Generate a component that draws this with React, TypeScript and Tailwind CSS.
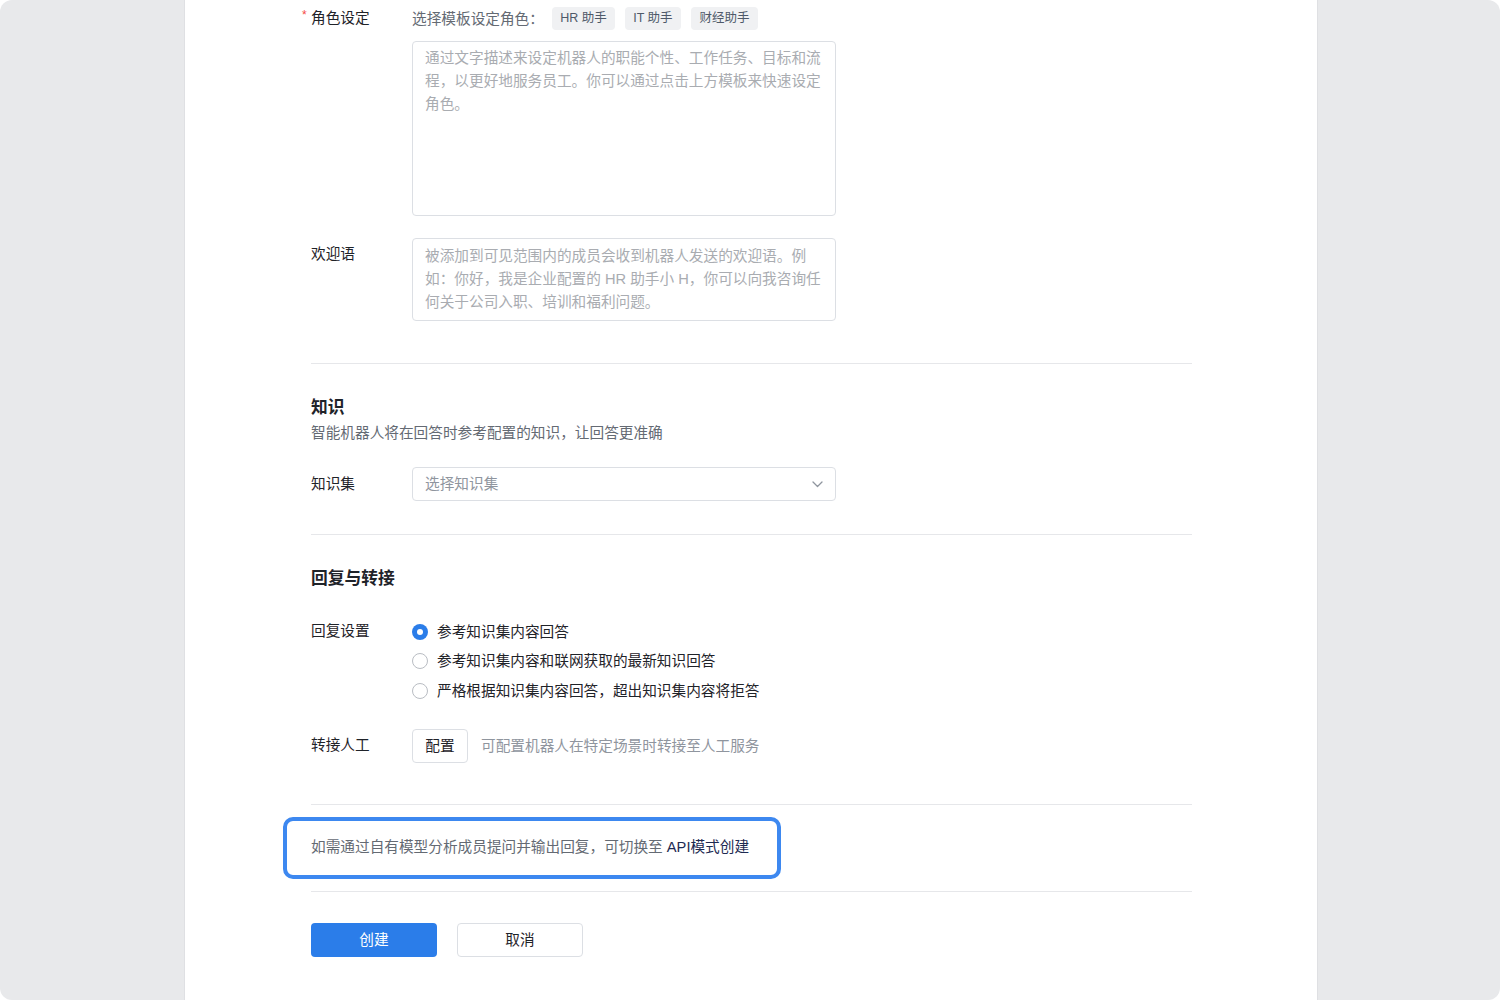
import React from 'react';

const font = { fontFamily: '"Liberation Sans", "Noto Sans CJK SC", sans-serif' };

function Label({ children, required }: { children: React.ReactNode; required?: boolean }) {
  return (
    <div className="relative w-[101px] shrink-0 text-[14.67px] leading-[23px] text-[#1f2329]">
      {required && <span className="absolute -left-[9px] top-[-3px] text-[12px] text-[#f54a45]">*</span>}
      {children}
    </div>
  );
}

function Radio({ checked, label }: { checked?: boolean; label: string }) {
  return (
    <div className="flex h-[29.5px] items-center">
      {checked ? (
        <span className="flex h-[16px] w-[16px] items-center justify-center rounded-full bg-[#2b7de9]">
          <span className="h-[6px] w-[6px] rounded-full bg-white" />
        </span>
      ) : (
        <span className="h-[16px] w-[16px] rounded-full border border-[#b9bdc3] bg-white" />
      )}
      <span className="ml-[9px] text-[14.67px] text-[#1f2329]">{label}</span>
    </div>
  );
}

const Divider = ({ className }: { className: string }) => <div className={`h-px bg-[#e6e7ea] ${className}`} />;

export default function App() {
  const chips = [
    { name: 'HR 助手', w: 'w-[63px]' },
    { name: 'IT 助手', w: 'w-[56px]' },
    { name: '财经助手', w: 'w-[67px]' },
  ];

  return (
    <div className="h-[1000px] w-[1500px] bg-white" style={font}>
      <div className="flex h-full overflow-hidden rounded-[12px] bg-[#e8e9eb] pl-[184px]">
        <div className="h-full w-[1134px] border-x border-[#dfe0e3] bg-white pl-[126px] pr-[125px]">
          {/* 角色设定 */}
          <div className="mt-[7px] flex">
            <Label required>角色设定</Label>
            <div className="w-[424px]">
              <div className="flex h-[23px] items-center">
                <span className="text-[14.67px] text-[#646a73]">选择模板设定角色：</span>
                <div className="ml-[8px] flex gap-[10px]">
                  {chips.map((c) => (
                    <span
                      key={c.name}
                      className={`flex h-[23px] ${c.w} items-center justify-center rounded-[4px] bg-[#f0f1f3] text-[12.5px] text-[#4e5969]`}
                    >
                      {c.name}
                    </span>
                  ))}
                </div>
              </div>
              <div className="mt-[11px] h-[175px] rounded-[4px] border border-[#dcdfe4] px-[12px] py-[5px] text-[14.67px] leading-[23px] text-[#a9acb1]">
                <div className="whitespace-nowrap">通过文字描述来设定机器人的职能个性、工作任务、目标和流</div>
                <div className="whitespace-nowrap">程，以更好地服务员工。你可以通过点击上方模板来快速设定</div>
                <div className="whitespace-nowrap">角色。</div>
              </div>
            </div>
          </div>

          {/* 欢迎语 */}
          <div className="mt-[22px] flex">
            <div className="pt-[5px]">
              <Label>欢迎语</Label>
            </div>
            <div className="h-[83px] w-[424px] rounded-[4px] border border-[#dcdfe4] px-[12px] py-[6px] text-[14.67px] leading-[23px] text-[#a9acb1]">
              <div className="whitespace-nowrap">被添加到可见范围内的成员会收到机器人发送的欢迎语。例</div>
              <div className="whitespace-nowrap">如：你好，我是企业配置的 HR 助手小 H，你可以向我咨询任</div>
              <div className="whitespace-nowrap">何关于公司入职、培训和福利问题。</div>
            </div>
          </div>

          <Divider className="mt-[42px]" />

          {/* 知识 */}
          <div className="mt-[32px] text-[16.75px] font-bold leading-[24px] text-[#1f2329]">知识</div>
          <div className="mt-[2px] text-[14.67px] leading-[22px] text-[#646a73]">智能机器人将在回答时参考配置的知识，让回答更准确</div>

          <div className="mt-[23px] flex items-center">
            <Label>知识集</Label>
            <div className="flex h-[34px] w-[424px] items-center justify-between rounded-[4px] border border-[#dcdfe4] pl-[12px] pr-[12px]">
              <span className="text-[14.67px] text-[#8f959e]">选择知识集</span>
              <svg width="11" height="7" viewBox="0 0 11 7" fill="none">
                <path d="M1 1l4.5 4.5L10 1" stroke="#8f959e" strokeWidth="1.3" strokeLinecap="round" strokeLinejoin="round" />
              </svg>
            </div>
          </div>

          <Divider className="mt-[33px]" />

          {/* 回复与转接 */}
          <div className="mt-[32px] text-[16.75px] font-bold leading-[24px] text-[#1f2329]">回复与转接</div>

          <div className="mt-[26px] flex">
            <div className="pt-[3px]">
              <Label>回复设置</Label>
            </div>
            <div>
              <Radio checked label="参考知识集内容回答" />
              <Radio label="参考知识集内容和联网获取的最新知识回答" />
              <Radio label="严格根据知识集内容回答，超出知识集内容将拒答" />
            </div>
          </div>

          <div className="mt-[23px] flex items-center">
            <Label>转接人工</Label>
            <button className="h-[34px] w-[56px] rounded-[4px] border border-[#dcdfe4] bg-white text-[14.67px] text-[#1f2329]">
              配置
            </button>
            <span className="ml-[13px] text-[14.67px] text-[#8f959e]">可配置机器人在特定场景时转接至人工服务</span>
          </div>

          <Divider className="mt-[41px]" />

          <div className="relative mt-[31px] text-[14.67px] leading-[22px] text-[#646a73]">
            如需通过自有模型分析成员提问并输出回复，可切换至 <span className="text-[#1d2a52]">API模式创建</span>
            <div className="pointer-events-none absolute -left-[28px] -top-[19px] h-[62px] w-[498px] rounded-[10px] border-[4px] border-[#3d88f0]" />
          </div>

          <Divider className="mt-[33px]" />

          <div className="mt-[31px] flex gap-[20px]">
            <button className="h-[34px] w-[126px] rounded-[4px] bg-[#2b7de9] text-[14.67px] text-white">创建</button>
            <button className="h-[34px] w-[126px] rounded-[4px] border border-[#dcdfe4] bg-white text-[14.67px] text-[#1f2329]">
              取消
            </button>
          </div>
        </div>
      </div>
    </div>
  );
}
